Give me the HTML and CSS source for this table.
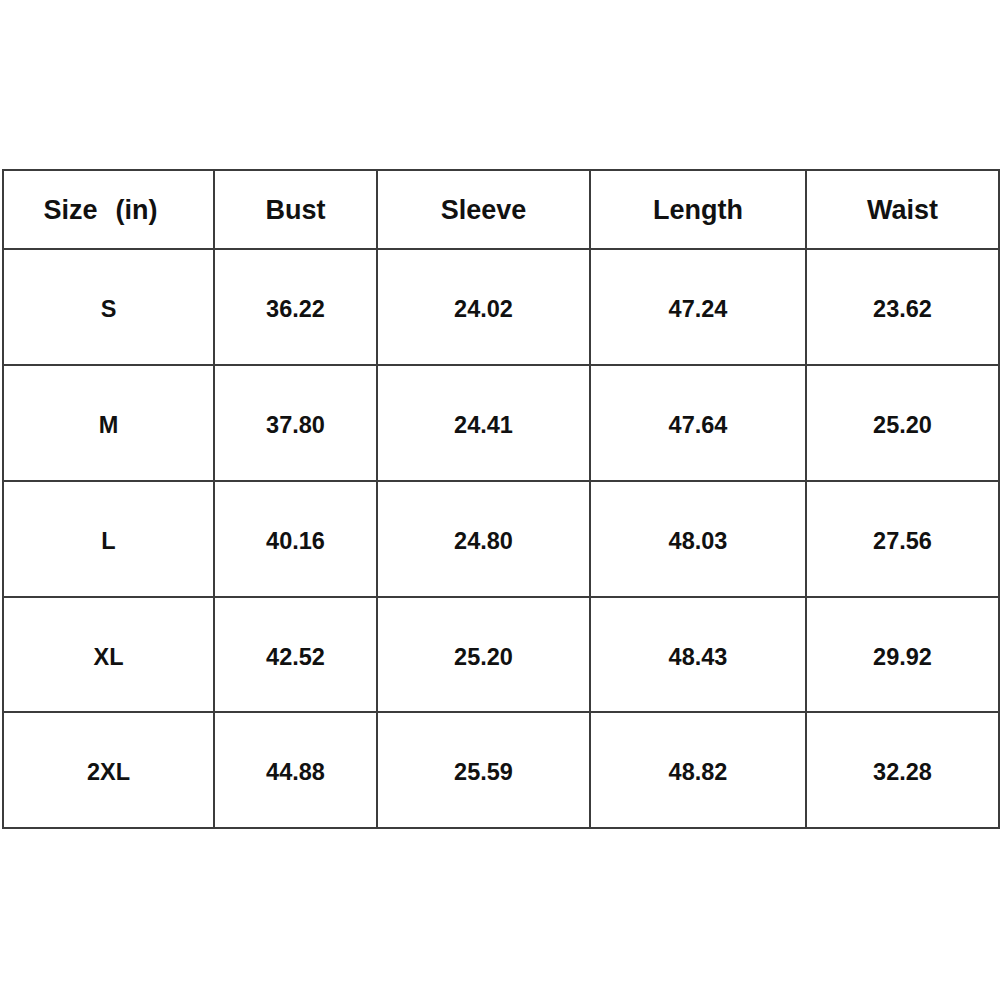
FILE: index.html
```html
<!DOCTYPE html>
<html lang="en">
<head>
<meta charset="utf-8">
<title>Size Chart</title>
<link rel="stylesheet" href="styles.css">
</head>
<body>
<div class="page">
  <div class="chart" role="table">
    <div class="cell head">Size<span class="unit">(in)</span></div>
    <div class="cell head">Bust</div>
    <div class="cell head">Sleeve</div>
    <div class="cell head">Length</div>
    <div class="cell head">Waist</div>

    <div class="cell">S</div>
    <div class="cell">36.22</div>
    <div class="cell">24.02</div>
    <div class="cell">47.24</div>
    <div class="cell">23.62</div>

    <div class="cell">M</div>
    <div class="cell">37.80</div>
    <div class="cell">24.41</div>
    <div class="cell">47.64</div>
    <div class="cell">25.20</div>

    <div class="cell">L</div>
    <div class="cell">40.16</div>
    <div class="cell">24.80</div>
    <div class="cell">48.03</div>
    <div class="cell">27.56</div>

    <div class="cell">XL</div>
    <div class="cell">42.52</div>
    <div class="cell">25.20</div>
    <div class="cell">48.43</div>
    <div class="cell">29.92</div>

    <div class="cell">2XL</div>
    <div class="cell">44.88</div>
    <div class="cell">25.59</div>
    <div class="cell">48.82</div>
    <div class="cell">32.28</div>
  </div>
</div>
</body>
</html>
```
FILE: styles.css
```css
html, body {
  margin: 0;
  padding: 0;
  background: #ffffff;
}

.page {
  width: 1000px;
  height: 1000px;
  padding-top: 169px;
  padding-left: 2px;
  box-sizing: border-box;
}

.chart {
  display: grid;
  grid-template-columns: 209px 161px 211px 214px 191px;
  grid-template-rows: 77px 114px 114px 114px 113px 114px;
  gap: 2px;
  padding: 2px;
  width: 998px;
  box-sizing: border-box;
  background: #3c3c3c;
  font-family: "Liberation Sans", Arial, sans-serif;
  font-weight: bold;
  color: #111111;
}

.cell {
  background: #ffffff;
  display: flex;
  align-items: center;
  justify-content: center;
  font-size: 23.5px;
  padding-top: 5px;
  box-sizing: border-box;
}

.cell.head {
  font-size: 27px;
  padding-top: 2px;
}

.unit {
  margin-left: 18px;
  margin-right: 16px;
}
```
